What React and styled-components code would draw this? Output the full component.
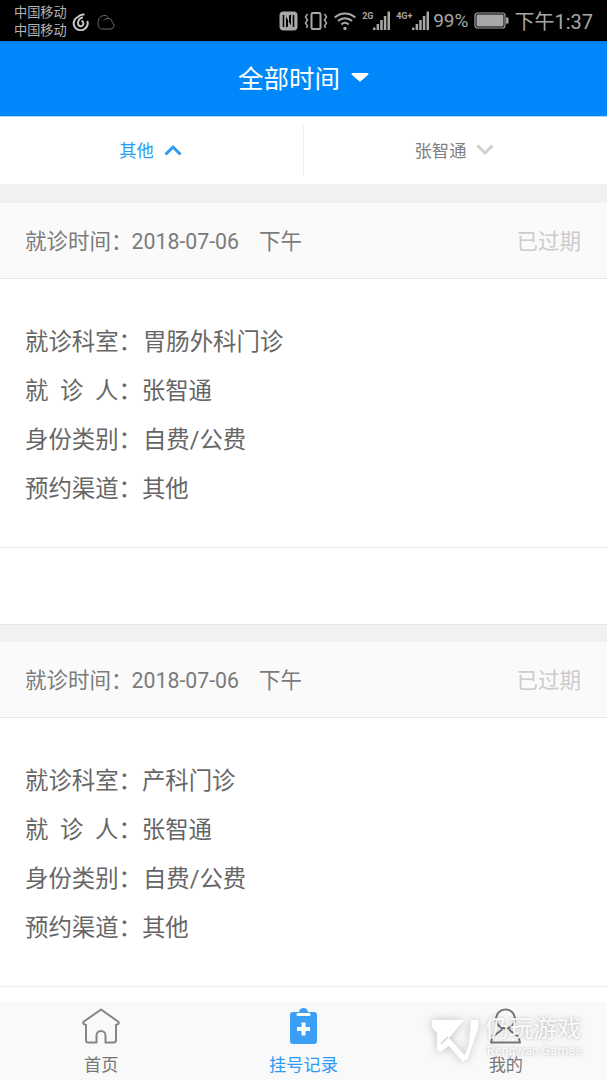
import React from 'react'
import styled, { createGlobalStyle } from 'styled-components'

const GlobalStyle = createGlobalStyle`
  html, body {
    margin: 0;
    padding: 0;
    background: #fff;
  }
  body {
    font-family: Roboto, "Noto Sans CJK SC", sans-serif;
  }
`

const Page = styled.div`
  position: relative;
  width: 607px;
  height: 1080px;
  display: flex;
  flex-direction: column;
  overflow: hidden;
`

const StatusBar = styled.div`
  height: 41px;
  flex: none;
  background: #000;
  color: #a8a8a8;
  display: flex;
  align-items: center;
  padding: 0 14px;
  box-sizing: border-box;
`

const Carriers = styled.div`
  font-size: 13.2px;
  line-height: 18px;
  color: #b4b4b4;
  padding-top: 2px;
  margin-right: 5px;
`

const LeftIcons = styled.div`
  display: flex;
  align-items: center;
  gap: 8px;
  margin-top: 2px;
`

const StatusRight = styled.div`
  margin-left: auto;
  display: flex;
  align-items: center;
  gap: 6px;
`

const Percent = styled.span`
  font-size: 19px;
  margin-left: -2px;
`

const Clock = styled.span`
  font-size: 20px;
  margin-left: -1px;
`

const Header = styled.div`
  height: 76px;
  flex: none;
  background: linear-gradient(#0079dc 0, #0088fb 3px);
  color: #fff;
  font-size: 25.5px;
  display: flex;
  align-items: center;
  justify-content: center;
  gap: 11px;
  padding-bottom: 4px;
  border-bottom: 1px solid #a9d7fb;
  box-sizing: border-box;
`

const Filters = styled.div`
  height: 67px;
  flex: none;
  background: #fff;
  display: flex;
  align-items: center;
`

const Filter = styled.div`
  flex: 1;
  height: 51px;
  display: flex;
  align-items: center;
  justify-content: center;
  gap: 10px;
  padding: 0 2px 2px 0;
  box-sizing: border-box;
  font-size: 17.3px;
  color: ${props => (props.active ? '#2c9bf6' : '#808080')};
  & + & {
    border-left: 1px solid #eeeeee;
  }
`

const Gap = styled.div`
  height: ${props => props.size}px;
  flex: none;
  background: #f1f1f1;
`

const Card = styled.div`
  flex: none;
  background: #fff;
`

const CardHead = styled.div`
  height: 76px;
  box-sizing: border-box;
  background: #fafafa;
  border-bottom: 1px solid #e6e6e6;
  padding: 0 26px 3px 25px;
  display: flex;
  align-items: center;
  justify-content: space-between;
  font-size: 21.5px;
  color: #7b7b7b;
`

const HeadInfo = styled.div`
  display: flex;
  align-items: baseline;
`

const DateText = styled.span`
  margin-left: -1px;
  font-size: 21.3px;
`

const Period = styled.span`
  margin-left: 20px;
`

const Expired = styled.span`
  color: #cccccc;
`

const CardBody = styled.div`
  height: 269px;
  box-sizing: border-box;
  border-bottom: 1px solid #ececec;
  padding: 36px 25px 0;
`

const Row = styled.div`
  height: 49px;
  display: flex;
  align-items: center;
  font-size: 23.4px;
  color: #666666;
`

const RowValue = styled.span`
  margin-left: ${props => props.offset || 0}px;
`

const CardFoot = styled.div`
  height: ${props => props.size}px;
  background: #fff;
  border-bottom: ${props => (props.lined ? '1px solid #e6e6e6' : 'none')};
`

const TabBar = styled.div`
  position: absolute;
  left: 0;
  right: 0;
  bottom: 0;
  height: 78px;
  background: #f9f9f9;
  display: flex;
`

const Tab = styled.div`
  flex: 1;
  display: flex;
  flex-direction: column;
  align-items: center;
  padding-top: 6px;
  box-sizing: border-box;
  font-size: 17.2px;
  line-height: 16px;
  color: ${props => (props.active ? '#2c9bf6' : '#777777')};
`

const TabIcon = styled.div`
  height: 49px;
  & svg {
    display: block;
  }
`

const Watermark = styled.div`
  position: absolute;
  left: 432px;
  top: 1017px;
  display: flex;
  gap: 7px;
  color: rgba(255, 255, 255, 0.95);
  text-shadow: 0 0 3px rgba(0, 0, 0, 0.22), 0 0 9px rgba(0, 0, 0, 0.14);
  pointer-events: none;
`

const WatermarkText = styled.div`
  display: flex;
  flex-direction: column;
`

const WatermarkTitle = styled.span`
  font-size: 24px;
  line-height: 24px;
`

const WatermarkSub = styled.span`
  font-size: 12.6px;
  line-height: 10px;
  margin: 5px 0 0 2px;
  white-space: nowrap;
`

const LogoSvg = styled.svg`
  margin-top: 2px;
  filter: drop-shadow(0 0 5px rgba(0, 0, 0, 0.24));
`

const NetEase = () => (
  <svg width="17" height="18" viewBox="0 0 17 18" fill="none" stroke="#c8c8c8" strokeWidth="2">
    <path d="M12.500 1.500C10 1.200 7.500 2 6 3.800A7 7 0 1 0 15.300 8" />
    <path d="M10.800 4.200C8 4.800 6 7.500 6 10.500a2.700 2.700 0 1 0 5.300-.7C11 8.500 10.300 8 9.500 7.600" />
  </svg>
)

const Cloud = () => (
  <svg width="18" height="16" viewBox="0 0 18 16" fill="none" stroke="#6e6e6e" strokeWidth="1">
    <path d="M4.500 15h9a3.500 3.500 0 0 0 1.800-6.500C15 6 13.500 4.500 11.500 4.500 10.500 2 8.500 1 6.500 1.500 3 2.300 1 5 1 8.500 1 12.500 2.500 15 4.500 15z" />
    <path d="M6.500 6.500c1.300-1.500 3.200-2.200 5-2" />
  </svg>
)

const Nfc = () => (
  <svg width="19" height="20" viewBox="0 0 19 20">
    <rect x="0.500" y="0.500" width="18" height="19" rx="4" fill="#a8a8a8" />
    <path d="M4.500 4v12M14.500 4v12" stroke="#000" strokeWidth="1.500" fill="none" />
    <path d="M7 5.500v11l2-1V9l3 5.500v-11l-2 1V11z" fill="#000" />
  </svg>
)

const Vibrate = () => (
  <svg width="24" height="20" viewBox="0 0 24 20" fill="none" stroke="#a8a8a8" strokeWidth="1.500">
    <rect x="7.500" y="2" width="9" height="16" rx="1.500" strokeWidth="2" />
    <path d="M3.500 3L1.500 6l2 3-2 3 2 3 -1 2" />
    <path d="M20.500 3l2 3-2 3 2 3-2 3 1 2" />
  </svg>
)

const Wifi = () => (
  <svg width="22" height="20" viewBox="0 0 22 20" fill="none" stroke="#a8a8a8" strokeWidth="2">
    <path d="M.7 6.500c6-5.500 14.600-5.500 20.600 0M4 10c4-3.700 10-3.700 14 0M7.300 13.500c2.200-2 5.200-2 7.400 0" />
    <circle cx="11" cy="17.500" r="1.700" fill="#a8a8a8" stroke="none" />
  </svg>
)

const SignalWrap = styled.div`
  position: relative;
  width: ${props => props.w}px;
  height: 20px;
`

const SignalTag = styled.span`
  position: absolute;
  left: 0;
  top: 0;
  font-size: 9px;
  line-height: 10px;
  font-weight: 700;
  color: #a8a8a8;
`

const Signal = ({ tag, w }) => (
  <SignalWrap w={w}>
    <SignalTag>{tag}</SignalTag>
    <svg width={w} height="20" viewBox={`0 0 ${w} 20`} fill="#a8a8a8">
      <rect x={w - 17} y="16.500" width="2.500" height="2.500" />
      <rect x={w - 13.400} y="13" width="2.500" height="6" />
      <rect x={w - 9.800} y="9" width="2.500" height="10" />
      <rect x={w - 6.200} y="5" width="2.500" height="14" />
      <rect x={w - 2.500} y="0.500" width="2.500" height="18.500" />
    </svg>
  </SignalWrap>
)

const Battery = () => (
  <svg width="35" height="17" viewBox="0 0 35 17">
    <rect x="1" y="1" width="30" height="15" rx="2.500" fill="none" stroke="#a8a8a8" strokeWidth="1.200" />
    <rect x="2.500" y="2.500" width="27" height="12" rx="1" fill="#a8a8a8" />
    <rect x="32" y="5.500" width="2.500" height="6" fill="#a8a8a8" />
  </svg>
)

const Caret = () => (
  <svg width="18" height="10" viewBox="0 0 18 10">
    <path d="M1.500 1h15a1 1 0 0 1 .7 1.700L9.700 9.300a1 1 0 0 1-1.400 0L.8 2.700A1 1 0 0 1 1.500 1z" fill="#fff" />
  </svg>
)

const Chevron = ({ up, color }) => (
  <svg width="18" height="12" viewBox="0 0 18 12" fill="none" stroke={color} strokeWidth="3">
    <path d={up ? 'M1.500 10.500L9 3l7.500 7.500' : 'M1.500 1.500L9 9l7.500-7.500'} />
  </svg>
)

const HomeIcon = () => (
  <svg width="38" height="36" viewBox="0 0 38 36" fill="none" stroke="#858585" strokeWidth="2" strokeLinejoin="round">
    <path d="M19 1.500L36 13.500a1.500 1.500 0 0 1-.5 2.800L34 17v15a2.500 2.500 0 0 1-2.500 2.500H23.500v-7a4.500 4.500 0 0 0-9 0v7H6.500A2.500 2.500 0 0 1 4 32V17l-1.500-.7a1.500 1.500 0 0 1-.5-2.800z" />
  </svg>
)

const ClipboardIcon = () => (
  <svg width="27" height="36" viewBox="0 0 27 36">
    <rect x="0" y="4" width="27" height="32" rx="3" fill="#3a9ff5" />
    <path d="M9 5V4.500a4.500 4.500 0 0 1 9 0V5z" fill="#3a9ff5" />
    <path d="M8 6.500h11" stroke="#fff" strokeWidth="3" strokeLinecap="round" />
    <path d="M13.500 14.500v13M7 21h13" stroke="#fff" strokeWidth="4" />
  </svg>
)

const UserIcon = () => (
  <svg width="32" height="36" viewBox="0 0 32 36" fill="none" stroke="#777777" strokeWidth="2" strokeLinejoin="round">
    <circle cx="15.500" cy="11" r="9.500" />
    <path d="M12 20.500c0 3-7.500 5.500-9.500 8.500L1 34.500h29L28.500 29c-2-3-9.500-5.500-9.500-8.500" />
  </svg>
)

const WatermarkLogo = () => (
  <LogoSvg width="46" height="43" viewBox="0 0 46 43" fill="#fff">
    <path d="M0 1h32L17 19l18 20-4 4L17 27l-9 6-3-2V14L0 8z" />
    <path d="M9 25l7-7" stroke="#dcdcdc" strokeWidth="2" />
    <path d="M39 1h7v9L35 41l-3-3 5-12z" />
  </LogoSvg>
)

const records = [
  { dept: '胃肠外科门诊', offset: 1 },
  { dept: '产科门诊', offset: 0 }
]

const App = () => (
  <Page>
    <GlobalStyle />
    <StatusBar>
      <Carriers>
        中国移动
        <br />
        中国移动
      </Carriers>
      <LeftIcons>
        <NetEase />
        <Cloud />
      </LeftIcons>
      <StatusRight>
        <Nfc />
        <Vibrate />
        <Wifi />
        <Signal tag="2G" w={28} />
        <Signal tag="4G+" w={33} />
        <Percent>99%</Percent>
        <Battery />
        <Clock>下午1:37</Clock>
      </StatusRight>
    </StatusBar>
    <Header>
      全部时间
      <Caret />
    </Header>
    <Filters>
      <Filter active>
        其他
        <Chevron up color="#2c9bf6" />
      </Filter>
      <Filter>
        张智通
        <Chevron color="#cfcfcf" />
      </Filter>
    </Filters>
    <Gap size={19} />
    {records.map((record, i) => (
      <React.Fragment key={record.dept}>
        <Card>
          <CardHead>
            <HeadInfo>
              就诊时间：<DateText>2018-07-06</DateText>
              <Period>下午</Period>
            </HeadInfo>
            <Expired>已过期</Expired>
          </CardHead>
          <CardBody>
            <Row>
              就诊科室：<RowValue offset={record.offset}>{record.dept}</RowValue>
            </Row>
            <Row>
              就&nbsp;&nbsp;诊&nbsp;&nbsp;人：<RowValue>张智通</RowValue>
            </Row>
            <Row>
              身份类别：<RowValue offset={1}>自费/公费</RowValue>
            </Row>
            <Row>
              预约渠道：<RowValue>其他</RowValue>
            </Row>
          </CardBody>
          <CardFoot size={76} lined={i === 0} />
        </Card>
        {i === 0 && <Gap size={17} />}
      </React.Fragment>
    ))}
    <TabBar>
      <Tab>
        <TabIcon>
          <HomeIcon />
        </TabIcon>
        首页
      </Tab>
      <Tab active>
        <TabIcon>
          <ClipboardIcon />
        </TabIcon>
        挂号记录
      </Tab>
      <Tab>
        <TabIcon>
          <UserIcon />
        </TabIcon>
        我的
      </Tab>
    </TabBar>
    <Watermark>
      <WatermarkLogo />
      <WatermarkText>
        <WatermarkTitle>仍玩游戏</WatermarkTitle>
        <WatermarkSub>Rengwan Games</WatermarkSub>
      </WatermarkText>
    </Watermark>
  </Page>
)

export default App
